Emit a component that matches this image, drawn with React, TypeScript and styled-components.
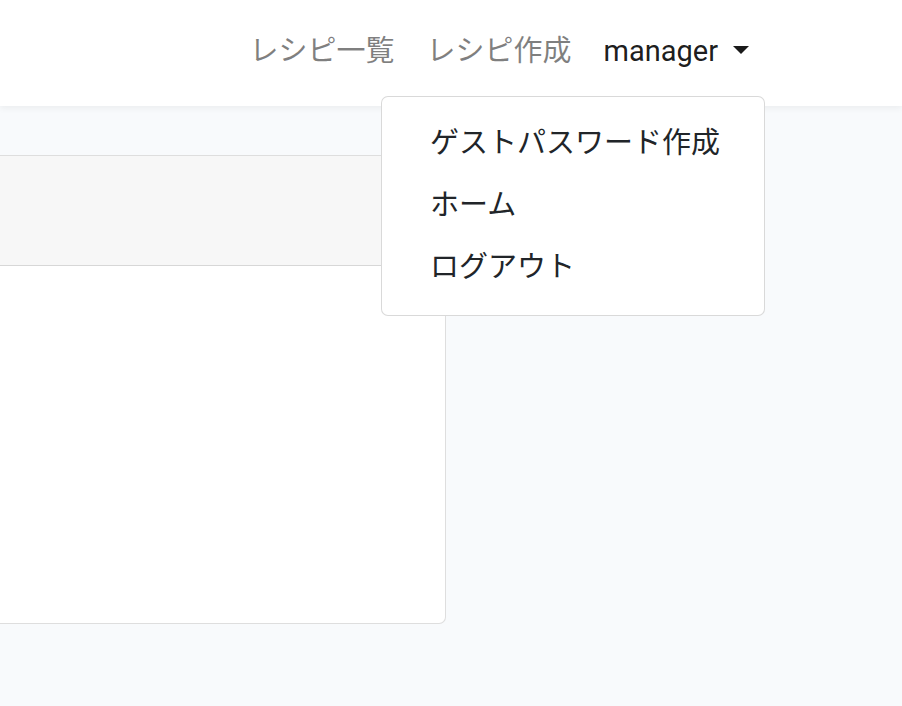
import React from "react";
import styled, { createGlobalStyle } from "styled-components";

const Global = createGlobalStyle`
  html, body { margin: 0; padding: 0; }
  body {
    background: #f8fafc;
    font-family: "Noto Sans CJK JP", sans-serif;
    color: #212529;
    overflow: hidden;
  }
`;

const Page = styled.div`
  width: 902px;
  height: 706px;
  background: #f8fafc;
  display: flex;
  flex-direction: column;
`;

const NavBar = styled.nav`
  height: 106px;
  box-sizing: border-box;
  background: #fff;
  box-shadow: 0 2px 7px rgba(0, 0, 0, 0.06);
  display: flex;
  align-items: center;
  justify-content: flex-end;
  padding: 0 137px 4px 0;
  position: relative;
  z-index: 2;
  flex-shrink: 0;
`;

const NavList = styled.ul`
  list-style: none;
  margin: 0;
  padding: 0;
  display: flex;
  align-items: center;
`;

const NavItem = styled.li`
  position: relative;
`;

const NavLink = styled.a<{ $active?: boolean }>`
  display: flex;
  align-items: center;
  padding: 0 16px;
  font-family: Roboto, "Noto Sans CJK JP", sans-serif;
  font-size: 29px;
  line-height: 42px;
  color: ${(p) => (p.$active ? "rgba(0,0,0,0.9)" : "rgba(0,0,0,0.5)")};
  text-decoration: none;
  white-space: nowrap;
`;

const Caret = styled.span`
  display: inline-block;
  margin-left: 15px;
  width: 0;
  height: 0;
  border-left: 8px solid transparent;
  border-right: 8px solid transparent;
  border-top: 8px solid #1a1a1a;
  position: relative;
  top: -1px;
`;

const Menu = styled.div`
  position: absolute;
  top: 66px;
  right: 0;
  width: 384px;
  background: #fff;
  border: 1px solid rgba(0, 0, 0, 0.15);
  border-radius: 7px;
  padding: 12px 0 20px;
  box-sizing: border-box;
`;

const MenuItem = styled.a`
  display: block;
  padding: 0 48px;
  height: 62px;
  line-height: 62px;
  font-size: 29px;
  color: #212529;
  text-decoration: none;
  white-space: nowrap;
`;

const Main = styled.main`
  padding-top: 49px;
  display: flex;
`;

const Card = styled.div`
  width: 456px;
  margin-left: -10px;
  height: 469px;
  background: #fff;
  border: 1px solid rgba(0, 0, 0, 0.13);
  border-radius: 7px;
  display: flex;
  flex-direction: column;
  overflow: hidden;
  box-sizing: border-box;
`;

const CardHeader = styled.div`
  height: 109px;
  background: #f7f7f7;
  border-bottom: 1px solid rgba(0, 0, 0, 0.13);
  flex-shrink: 0;
`;

const CardBody = styled.div`
  flex: 1;
`;

export default function App() {
  return (
    <Page>
      <Global />
      <NavBar>
        <NavList>
          <NavItem>
            <NavLink href="#">レシピ一覧</NavLink>
          </NavItem>
          <NavItem>
            <NavLink href="#">レシピ作成</NavLink>
          </NavItem>
          <NavItem>
            <NavLink href="#" $active>
              manager
              <Caret />
            </NavLink>
            <Menu>
              <MenuItem href="#">ゲストパスワード作成</MenuItem>
              <MenuItem href="#">ホーム</MenuItem>
              <MenuItem href="#">ログアウト</MenuItem>
            </Menu>
          </NavItem>
        </NavList>
      </NavBar>
      <Main>
        <Card>
          <CardHeader />
          <CardBody />
        </Card>
      </Main>
    </Page>
  );
}
